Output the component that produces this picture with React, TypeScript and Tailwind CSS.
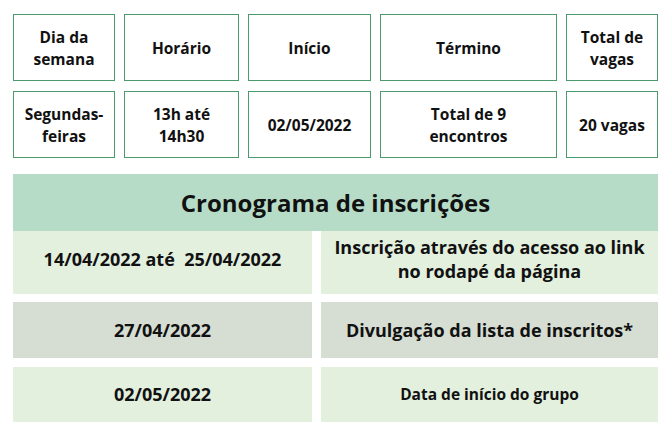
const infoTop = [
  { label: 'Dia da\nsemana', w: 'w-[102px]' },
  { label: 'Horário', w: 'w-[115px]' },
  { label: 'Início', w: 'w-[123px]' },
  { label: 'Término', w: 'w-[177px]' },
  { label: 'Total de\nvagas', w: 'w-[92px]' },
]

const infoBottom = [
  { label: 'Segundas-\nfeiras', w: 'w-[102px]' },
  { label: '13h até\n14h30', w: 'w-[115px]' },
  { label: '02/05/2022', w: 'w-[123px]' },
  { label: 'Total de 9\nencontros', w: 'w-[177px]' },
  { label: '20 vagas', w: 'w-[92px]' },
]

function InfoRow({ items }: { items: { label: string; w: string }[] }) {
  return (
    <div className="flex gap-[9px]">
      {items.map((item) => (
        <div
          key={item.label}
          className={`${item.w} h-[67px] flex items-center justify-center whitespace-pre-line border border-[#4a9a6e] text-center text-[15.5px] leading-[22px] font-bold text-[#111]`}
        >
          {item.label}
        </div>
      ))}
    </div>
  )
}

export default function App() {
  return (
    <div
      className="min-h-screen bg-white pl-[13px] pt-[14px]"
      style={{ fontFamily: '"Open Sans", "Noto Sans", sans-serif' }}
    >
      <div className="flex w-[645px] flex-col gap-[10px]">
        <InfoRow items={infoTop} />
        <InfoRow items={infoBottom} />
      </div>

      <div className="mt-[16px] w-[645px]">
        <div className="flex h-[57px] items-center justify-center bg-[#b6dcc8] text-[24px] font-bold text-[#111]">
          Cronograma de inscrições
        </div>

        <div className="flex gap-[9px]">
          <div className="flex h-[63px] w-[299px] items-center justify-center bg-[#e3f0de] pb-[6px] text-[18px] font-bold text-[#111]">
            14/04/2022 até&nbsp; 25/04/2022
          </div>
          <div className="flex h-[63px] flex-1 items-center justify-center bg-[#e3f0de] pb-[8px] text-center text-[18px] leading-[24px] font-bold text-[#111]">
            Inscrição através do acesso ao link
            <br />
            no rodapé da página
          </div>
        </div>

        <div className="mt-[8px] flex gap-[9px]">
          <div className="flex h-[56px] w-[299px] items-center justify-center bg-[#d6ded3] text-[18px] font-bold text-[#111]">
            27/04/2022
          </div>
          <div className="flex h-[56px] flex-1 items-center justify-center bg-[#d6ded3] text-[18px] font-bold text-[#111]">
            Divulgação da lista de inscritos*
          </div>
        </div>

        <div className="mt-[9px] flex gap-[9px]">
          <div className="flex h-[55px] w-[299px] items-center justify-center bg-[#e3f0de] text-[18px] font-bold text-[#111]">
            02/05/2022
          </div>
          <div className="flex h-[55px] flex-1 items-center justify-center bg-[#e3f0de] text-[15.5px] font-bold text-[#111]">
            Data de início do grupo
          </div>
        </div>
      </div>
    </div>
  )
}
